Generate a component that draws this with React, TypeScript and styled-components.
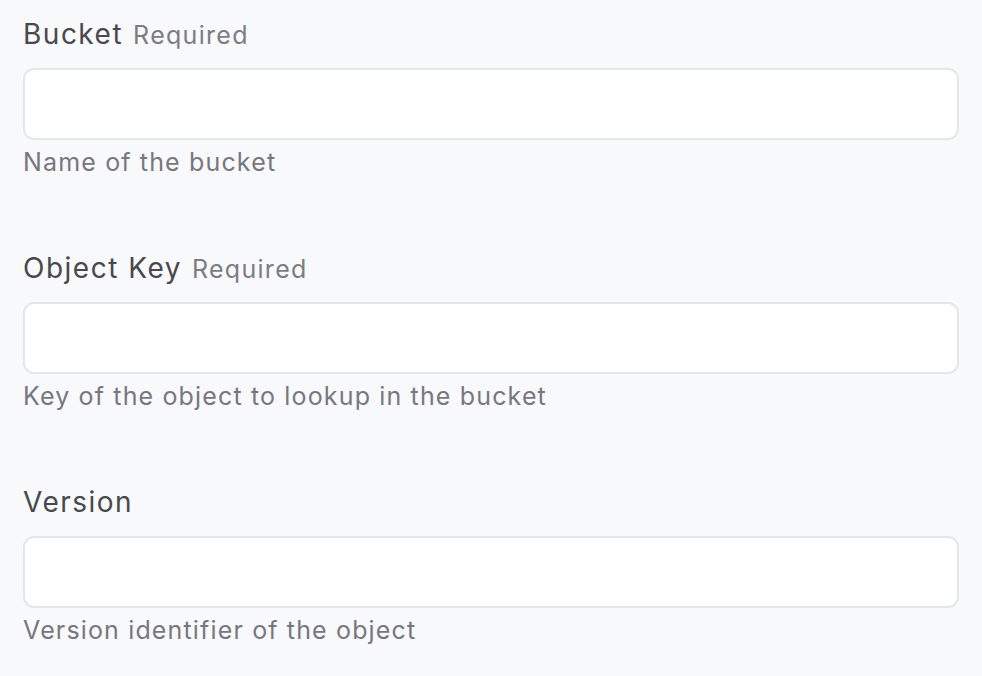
import React from "react";
import styled, { createGlobalStyle } from "styled-components";

const Global = createGlobalStyle`
  html, body { margin: 0; padding: 0; background: #f8f9fb; }
  body { font-family: Inter, "Noto Sans", "Liberation Sans", sans-serif; -webkit-font-smoothing: antialiased; }
`;

const Form = styled.form`
  display: flex;
  flex-direction: column;
  gap: 70px;
  padding: 16px 23px 0 23px;
  width: 936px;
`;

const Field = styled.div`
  display: flex;
  flex-direction: column;
`;

const LabelRow = styled.label`
  display: flex;
  align-items: baseline;
  gap: 10px;
  height: 36px;
  line-height: 36px;
  margin-bottom: 16px;
`;

const LabelText = styled.span`
  font-size: 28px;
  letter-spacing: 1.5px;
  color: #48484d;
  font-weight: 400;
`;

const Required = styled.span`
  font-size: 25px;
  letter-spacing: 1.3px;
  color: #7c7c84;
`;

const Input = styled.input`
  box-sizing: border-box;
  height: 72px;
  width: 100%;
  border: 2px solid #e5e6ea;
  border-radius: 11px;
  background: #ffffff;
  outline: none;
  font: inherit;
  font-size: 26px;
  padding: 0 20px;
`;

const Help = styled.div`
  margin-top: 4px;
  font-size: 25px;
  letter-spacing: 1.15px;
  line-height: 36px;
  color: #777780;
`;

const fields = [
  { label: "Bucket", required: true, help: "Name of the bucket" },
  { label: "Object Key", required: true, help: "Key of the object to lookup in the bucket" },
  { label: "Version", required: false, help: "Version identifier of the object" },
];

export default function App() {
  return (
    <>
      <Global />
      <Form onSubmit={(e) => e.preventDefault()}>
        {fields.map((f) => (
          <Field key={f.label}>
            <LabelRow>
              <LabelText>{f.label}</LabelText>
              {f.required && <Required>Required</Required>}
            </LabelRow>
            <Input type="text" />
            <Help>{f.help}</Help>
          </Field>
        ))}
      </Form>
    </>
  );
}
